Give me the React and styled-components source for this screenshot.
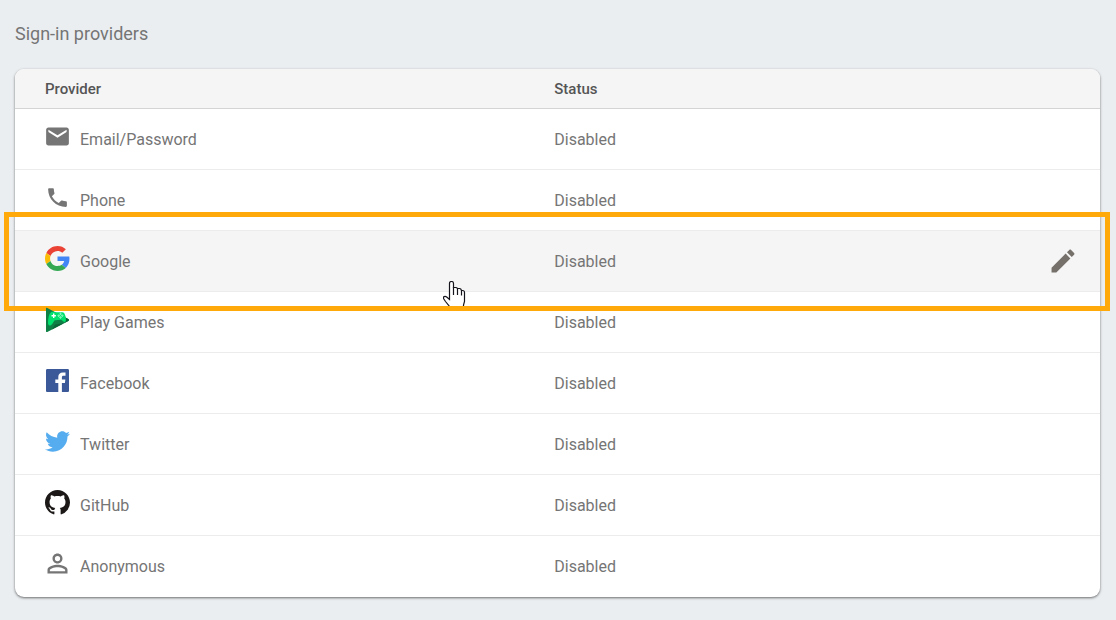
import React from "react";
import styled, { createGlobalStyle } from "styled-components";

const GlobalStyle = createGlobalStyle`
  *, *::before, *::after { box-sizing: border-box; }
  body {
    margin: 0;
    background: #ebeef1;
    color: #757575;
    font-family: Roboto, "Liberation Sans", sans-serif;
    font-size: 16px;
  }
`;

const Page = styled.main`
  padding: 22px 16px 22px 15px;
`;

const Title = styled.h2`
  margin: 0 0 23px;
  font-size: 18px;
  font-weight: 400;
  line-height: 24px;
`;

const Card = styled.section`
  border-radius: 9px;
  background: #fff;
  box-shadow: 0 1px 3px rgba(0, 0, 0, 0.35), 0 1px 2px rgba(0, 0, 0, 0.25);
`;

const ProviderTable = styled.table`
  width: 100%;
  table-layout: fixed;
  border-collapse: separate;
  border-spacing: 0;
  text-align: left;
`;

const HeadCell = styled.th`
  width: ${(p) => p.$width || "auto"};
  height: 40px;
  padding: 0 0 0 ${(p) => (p.$first ? "30px" : "0")};
  border-bottom: 1px solid #d4d4d4;
  border-radius: ${(p) => (p.$first ? "9px 0 0 0" : p.$last ? "0 9px 0 0" : "0")};
  background: #f5f5f5;
  color: #555;
  font-size: 15px;
  font-weight: 500;
  line-height: 20px;
`;

const Cell = styled.td`
  height: 61px;
  padding: 2px 0 0 ${(p) => (p.$first ? "30px" : "0")};
  border-bottom: 1px solid #ececec;
  line-height: 20px;
`;

const Row = styled.tr`
  position: relative;
  background: ${(p) => (p.$active ? "#f5f5f5" : "transparent")};

  &:last-child ${Cell} {
    border-bottom-color: transparent;
  }
`;

const Provider = styled.div`
  display: flex;
  align-items: center;
  gap: 10px;
`;

const Icon = styled.svg`
  flex: none;
  width: 25px;
  height: 25px;
  margin-bottom: 7px;
  fill: ${(p) => p.$color || "#757575"};
`;

const EditButton = styled.button`
  display: flex;
  margin: 0 23px 2px auto;
  padding: 0;
  border: 0;
  background: none;
  color: #757575;
  cursor: pointer;

  svg {
    width: 28px;
    height: 28px;
    fill: #757069;
  }
`;

const Highlight = styled.div`
  position: absolute;
  inset: -19px -10px -19px -11px;
  border: 5px solid #ffa90a;
  pointer-events: none;
`;

const Pointer = styled.svg`
  position: absolute;
  top: 50px;
  left: 428px;
  width: 23px;
  height: 27px;
  pointer-events: none;
`;

const icons = {
  mail: (
    <Icon viewBox="1 1 22 22" aria-hidden="true">
      <path d="M20 4H4c-1.1 0-2 .9-2 2v12c0 1.1.9 2 2 2h16c1.1 0 2-.9 2-2V6c0-1.1-.9-2-2-2zm0 4l-8 5-8-5V6l8 5 8-5v2z" />
    </Icon>
  ),
  phone: (
    <Icon viewBox="0 0 24 24" aria-hidden="true">
      <path d="M6.62 10.79c1.44 2.83 3.76 5.14 6.59 6.59l2.2-2.2c.27-.27.67-.36 1.02-.24 1.12.37 2.33.57 3.57.57.55 0 1 .45 1 1V20c0 .55-.45 1-1 1C10.61 21 3 13.39 3 4c0-.55.45-1 1-1h3.5c.55 0 1 .45 1 1 0 1.25.2 2.45.57 3.57.11.35.03.74-.25 1.02l-2.2 2.2z" />
    </Icon>
  ),
  google: (
    <Icon viewBox="0 0 48 48" aria-hidden="true">
      <path fill="#EA4335" d="M24 9.5c3.54 0 6.71 1.22 9.21 3.6l6.85-6.85C35.9 2.38 30.47 0 24 0 14.62 0 6.51 5.38 2.56 13.22l7.98 6.19C12.43 13.72 17.74 9.5 24 9.5z" />
      <path fill="#4285F4" d="M46.98 24.55c0-1.57-.15-3.09-.38-4.55H24v9.02h12.94c-.58 2.96-2.26 5.48-4.78 7.18l7.73 6c4.51-4.18 7.09-10.36 7.09-17.65z" />
      <path fill="#FBBC05" d="M10.53 28.59c-.48-1.45-.76-2.99-.76-4.59s.27-3.14.76-4.59l-7.98-6.19C.92 16.46 0 20.12 0 24c0 3.88.92 7.54 2.56 10.78l7.97-6.19z" />
      <path fill="#34A853" d="M24 48c6.48 0 11.93-2.13 15.89-5.81l-7.73-6c-2.15 1.45-4.92 2.3-8.16 2.3-6.26 0-11.57-4.22-13.47-9.91l-7.98 6.19C6.51 42.62 14.62 48 24 48z" />
    </Icon>
  ),
  games: (
    <Icon viewBox="0 0 25 25" aria-hidden="true">
      <path fill="#0f8045" d="M1 1.6C1 .8 1.6.5 2.3.9l21 11.2c.9.5.9 1.300 0 1.800l-21 11c-.7.4-1.300.1-1.300-.700z" />
      <path fill="#0b6637" d="M18 9.300l5.300 2.800c.9.5.9 1.300 0 1.800L7 22.400l3-5 10-1.500z" />
      <path fill="#00e06c" d="M3 15.500C3.200 11 4 6.700 6 5.200 7.500 4 9 5.300 10.500 5.300h5.300c1.500 0 2.700-.2 3.600 1.200 1.200 2 1.800 5 1.500 7.200-.2 1.300-1.600 1.500-2.500.8l-2.200-1.700-6.400.400c-1.300 1.200-2.400 4.700-4.500 5.200C3.500 18.800 2.900 17.200 3 15.500z" />
      <path fill="#fff" d="M8 6.500h1.400v1.500h1.500v1.400H9.400v1.500H8V9.400H6.500V8H8z" />
      <g fill="none" stroke="#c4ffe0" strokeWidth=".8">
        <circle cx="15.500" cy="6.900" r=".7" />
        <circle cx="13.700" cy="8.700" r=".7" />
        <circle cx="17.300" cy="8.700" r=".7" />
        <circle cx="15.500" cy="10.500" r=".7" />
      </g>
    </Icon>
  ),
  facebook: (
    <Icon viewBox="0 0 25 25" $color="#3b5998" aria-hidden="true">
      <path d="M2.300 1h20.400c.700 0 1.300.6 1.300 1.300v20.400c0 .7-.6 1.300-1.300 1.300h-5.800v-8.900h3l.45-3.500h-3.450V9.400c0-1 .3-1.700 1.750-1.700h1.850V4.600c-.3 0-1.400-.1-2.700-.1-2.700 0-4.500 1.600-4.500 4.600v2.500h-3v3.500h3V24h-11C1.600 24 1 23.400 1 22.700V2.300C1 1.600 1.600 1 2.300 1z" />
    </Icon>
  ),
  twitter: (
    <Icon viewBox="0 0 24 24" $color="#55acee" aria-hidden="true">
      <path d="M23.954 4.569c-.885.389-1.830.654-2.825.775 1.014-.611 1.794-1.574 2.163-2.723-.951.555-2.005.959-3.127 1.184-.896-.959-2.173-1.559-3.591-1.559-2.717 0-4.920 2.203-4.920 4.917 0 .390.045.765.127 1.124C7.691 8.094 4.066 6.130 1.640 3.161c-.427.722-.666 1.561-.666 2.475 0 1.710.870 3.213 2.188 4.096-.807-.026-1.566-.248-2.228-.616v.061c0 2.385 1.693 4.374 3.946 4.827-.413.111-.849.171-1.296.171-.314 0-.615-.030-.916-.086.631 1.953 2.445 3.377 4.604 3.417-1.680 1.319-3.809 2.105-6.102 2.105-.390 0-.779-.023-1.170-.067 2.189 1.394 4.768 2.209 7.557 2.209 9.054 0 13.999-7.496 13.999-13.986 0-.209 0-.420-.015-.630.961-.689 1.800-1.560 2.460-2.548l-.047-.020z" />
    </Icon>
  ),
  github: (
    <Icon viewBox="0 0 16 16" $color="#1b1817" aria-hidden="true">
      <path d="M8 0C3.580 0 0 3.580 0 8c0 3.540 2.290 6.530 5.470 7.590.4.070.550-.170.550-.380 0-.190-.010-.820-.010-1.490-2.010.370-2.530-.490-2.690-.940-.090-.230-.480-.940-.820-1.130-.280-.150-.680-.520-.010-.530.630-.010 1.080.580 1.230.820.720 1.210 1.870.870 2.330.660.070-.520.280-.870.510-1.070-1.780-.2-3.640-.890-3.640-3.950 0-.870.310-1.590.820-2.150-.080-.2-.360-1.020.080-2.120 0 0 .670-.210 2.200.820.640-.180 1.320-.270 2-.270s1.360.090 2 .270c1.530-1.040 2.200-.820 2.200-.820.440 1.100.160 1.920.080 2.120.510.560.820 1.270.820 2.150 0 3.070-1.870 3.750-3.650 3.950.290.250.540.730.540 1.480 0 1.070-.010 1.930-.010 2.200 0 .210.150.460.550.380A8.010 8.010 0 0 0 16 8c0-4.420-3.580-8-8-8z" />
    </Icon>
  ),
  person: (
    <Icon viewBox="2 2 20 20" aria-hidden="true">
      <path d="M12 5.900a2.100 2.100 0 1 1 0 4.200 2.100 2.100 0 0 1 0-4.200m0 9c2.970 0 6.100 1.460 6.100 2.100v1.100H5.900V17c0-.640 3.130-2.100 6.100-2.100M12 4C9.790 4 8 5.790 8 8s1.790 4 4 4 4-1.790 4-4-1.790-4-4-4zm0 9c-2.670 0-8 1.340-8 4v3h16v-3c0-2.660-5.330-4-8-4z" />
    </Icon>
  ),
};

const providers = [
  { name: "Email/Password", icon: "mail" },
  { name: "Phone", icon: "phone" },
  { name: "Google", icon: "google", active: true },
  { name: "Play Games", icon: "games" },
  { name: "Facebook", icon: "facebook" },
  { name: "Twitter", icon: "twitter" },
  { name: "GitHub", icon: "github" },
  { name: "Anonymous", icon: "person" },
];

function HandPointer() {
  return (
    <Pointer viewBox="0 0 23 27" aria-hidden="true">
      <path
        d="M6.500 18.500V2.500Q6.500.5 8.500.5T10.500 2.500V6.500H12.500Q14 6.500 14.500 7.500H16.500Q18 7.500 18.500 9.500H19.500Q21.500 9.500 21.500 11.500V20.500L20.500 24V27H6.500V25.500L2.500 20.500L.5 17.500V16Q2 14.500 4 16.200Z"
        fill="#fff"
        stroke="#14141c"
        strokeWidth="1.200"
      />
      <path d="M10.500 6v8M14.500 7.500v6.500M18.500 9.500v5" fill="none" stroke="#14141c" strokeWidth="1.200" />
    </Pointer>
  );
}

export default function App() {
  return (
    <>
      <GlobalStyle />
      <Page>
        <Title id="providers-title">Sign-in providers</Title>
        <Card>
          <ProviderTable aria-labelledby="providers-title">
            <thead>
              <tr>
                <HeadCell scope="col" $width="49.7%" $first>Provider</HeadCell>
                <HeadCell scope="col">Status</HeadCell>
                <HeadCell as="td" $width="80px" $last />
              </tr>
            </thead>
            <tbody>
              {providers.map(({ name, icon, active }) => (
                <Row key={name} $active={active}>
                  <Cell $first>
                    <Provider>
                      {icons[icon]}
                      {name}
                    </Provider>
                  </Cell>
                  <Cell>Disabled</Cell>
                  <Cell>
                    {active && (
                      <>
                        <EditButton type="button" aria-label={`Edit ${name}`}>
                          <svg viewBox="1 1 22 22" aria-hidden="true">
                            <path d="M3 17.250V21h3.750L17.810 9.940l-3.750-3.750L3 17.250zM20.710 7.040c.390-.390.390-1.020 0-1.410l-2.340-2.340c-.390-.390-1.020-.390-1.410 0l-1.830 1.830 3.750 3.750 1.830-1.830z" />
                          </svg>
                        </EditButton>
                        <HandPointer />
                        <Highlight />
                      </>
                    )}
                  </Cell>
                </Row>
              ))}
            </tbody>
          </ProviderTable>
        </Card>
      </Page>
    </>
  );
}
